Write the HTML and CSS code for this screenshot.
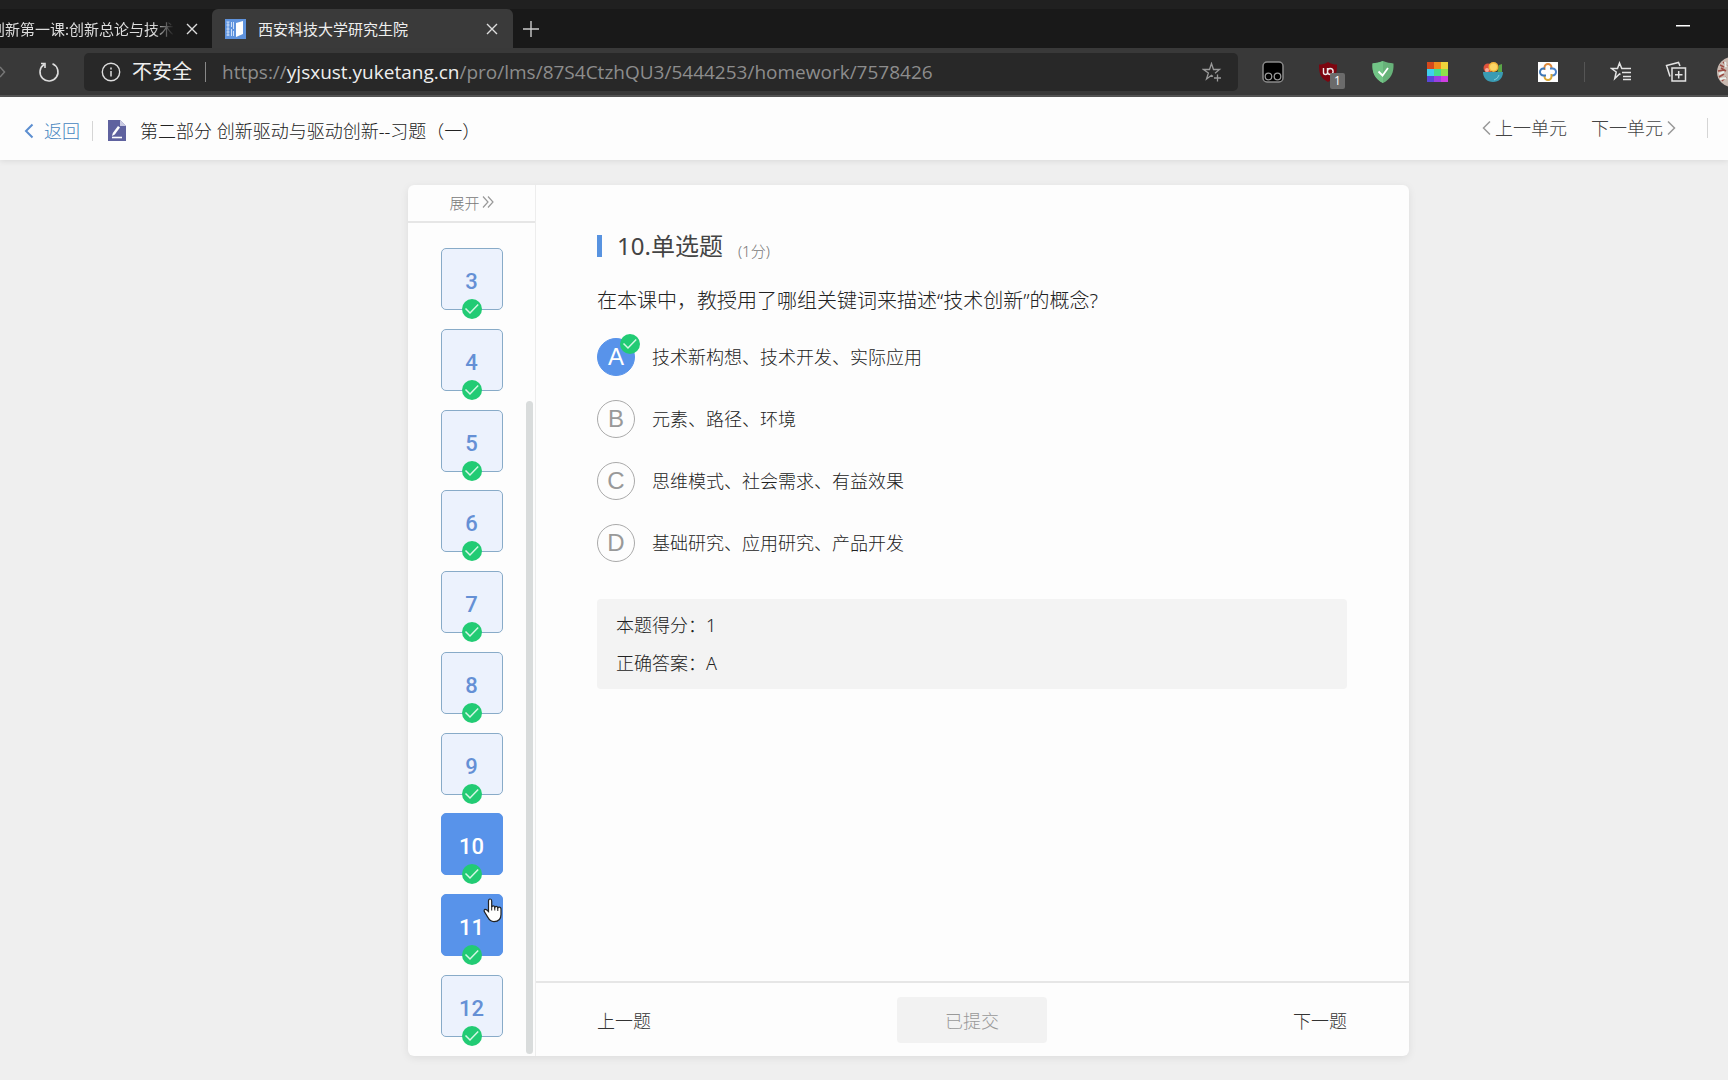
FILE: index.html
```html
<!DOCTYPE html>
<html lang="zh-CN">
<head>
<meta charset="utf-8">
<title>西安科技大学研究生院</title>
<link rel="stylesheet" href="styles.css">
</head>
<body>
<svg width="0" height="0" class="sprite" aria-hidden="true">
  <symbol id="check" viewBox="0 0 20 20"><circle cx="10" cy="10" r="10" fill="#22cb74"/><path d="M3.5 9.5 8 14 16.200 5.500" fill="none" stroke="#d6f7e5" stroke-width="1.500"/></symbol>
  <symbol id="close" viewBox="0 0 12 12"><path d="M1 1l10 10M11 1L1 11" stroke="#ddd" stroke-width="1.400"/></symbol>
</svg>

<div class="tabs">
  <div class="tab tab-first">
    <span class="tab-title faded">创新第一课:创新总论与技术</span>
    <button class="icon-btn" aria-label="关闭"><svg width="12" height="12"><use href="#close"/></svg></button>
  </div>
  <div class="tab tab-active">
    <svg width="21" height="20" viewBox="0 0 21 20"><path fill="#5f93dd" d="M0 0h21v20H0z"/><path fill="#fff" d="M11 4 18 2v13l-7 3z"/><path d="M1.500 3h3M1.500 6h3M1.500 10h3M1.500 13h3M1.500 16h3M6.500 3v5M8.500 3v7M6.500 10v7M8.500 12v5M3 3v14" stroke="#cfe0f8"/></svg>
    <span class="tab-title">西安科技大学研究生院</span>
    <button class="icon-btn" aria-label="关闭"><svg width="12" height="12"><use href="#close"/></svg></button>
  </div>
  <button class="icon-btn new-tab" aria-label="新标签页"><svg width="18" height="18" viewBox="0 0 18 18"><path d="M9 1v16M1 9h16" stroke="#ccc" stroke-width="1.400"/></svg></button>
  <button class="icon-btn minimise" aria-label="最小化"><svg width="14" height="2"><path fill="#fff" d="M0 0h14v1.500H0z"/></svg></button>
</div>

<div class="toolbar">
  <button class="icon-btn forward" aria-label="前进"><svg width="6" height="14" viewBox="0 0 6 14"><path d="M0 2l4.500 5L0 12" fill="none" stroke="#777" stroke-width="1.500"/></svg></button>
  <button class="icon-btn reload" aria-label="刷新"><svg width="22" height="22" viewBox="0 0 22 22"><path d="M14.500 2.700A9 9 0 1 1 6 3.500M3 2.500h4v4.500" fill="none" stroke="#ddd" stroke-width="1.600"/></svg></button>
  <div class="address">
    <svg width="20" height="20" viewBox="0 0 20 20"><circle cx="10" cy="10" r="8.700" fill="none" stroke="#ddd" stroke-width="1.400"/><path d="M10 9v5.500M10 5.500v2" stroke="#ddd" stroke-width="1.500"/></svg>
    <span class="insecure">不安全</span>
    <span class="bar"></span>
    <span class="url">https://<b>yjsxust.yuketang.cn</b>/pro/lms/87S4CtzhQU3/5444253/homework/7578426</span>
    <button class="icon-btn" aria-label="收藏"><svg width="21" height="21" viewBox="0 0 21 21"><path d="M11 14.500l-1.500-1.200-5 3.700 1.900-6L1.500 7.500h6L9.500 1.500l2 6h6l-4.500 3.700M15.500 12.500v7M12 16h7" fill="none" stroke="#999" stroke-width="1.300"/></svg></button>
  </div>
  <div class="extensions">
    <button class="icon-btn" aria-label="Tampermonkey"><svg width="22" height="22" viewBox="0 0 22 22"><rect x="1" y="1" width="20" height="20" rx="4" fill="#000" stroke="#8b8b8b" stroke-width="1.500"/><circle cx="6.500" cy="15.500" r="3.300" fill="none" stroke="#999" stroke-width="1.300"/><circle cx="15.500" cy="15.500" r="3.300" fill="none" stroke="#999" stroke-width="1.300"/></svg></button>
    <button class="icon-btn badged" aria-label="uBlock Origin"><svg width="20" height="20" viewBox="0 0 20 20"><path d="M10 0c3 2 6 2.500 9 2.500 0 9-1 13-9 17.500C2 15.500 1 11.500 1 2.500 4 2.500 7 2 10 0z" fill="#7d0610"/><path d="M5.500 6v4.500q0 2 2 2t2-2V6M9.500 9.500q0-3 2.800-3t2.800 3-2.800 3-2.800-3" fill="none" stroke="#eee" stroke-width="1.400"/></svg><span class="badge">1</span></button>
    <button class="icon-btn" aria-label="AdGuard"><svg width="22" height="22" viewBox="0 0 22 22"><path d="M11 0c4 1.500 7 2 10.500 2.500C22 12 19 18 11 22 3 18 0 12 .500 2.500 4 2 7 1.500 11 0z" fill="#67b279"/><path d="M11 0v22C3 18 0 12 .500 2.500 4 2 7 1.500 11 0z" fill="#72c486"/><path d="M6.500 10.500l4 4 5.500-7.500" fill="none" stroke="#fff" stroke-width="1.800"/></svg></button>
    <button class="icon-btn" aria-label="调色板"><svg width="22" height="22" viewBox="0 0 22 22"><path fill="#d6491c" d="M0 1h7v7H0z"/><path fill="#f08a1d" d="M7 1h7v7H7z"/><path fill="#eed43b" d="M14 1h7v7h-7z"/><path fill="#3fd0ee" d="M0 8h7v7H0z"/><path fill="#44dd8c" d="M7 8h7v7H7z"/><path fill="#8fe04a" d="M14 8h7v7h-7z"/><path fill="#5a46d8" d="M0 15h7v6H0z"/><path fill="#9a3fe0" d="M7 15h7v6H7z"/><path fill="#cf3fe0" d="M14 15h7v6h-7z"/></svg></button>
    <button class="icon-btn" aria-label="沙拉查词"><svg width="22" height="22" viewBox="0 0 22 22"><circle cx="6" cy="7" r="4.500" fill="#e0523c"/><path d="M17 4l3-1v10h-5z" fill="#5aa647"/><circle cx="11.500" cy="6" r="5" fill="#f4b63c"/><circle cx="11.500" cy="6" r="3.500" fill="#fbd565"/><circle cx="5" cy="9" r="2" fill="#f6ab9b"/><path d="M1 11h20c0 6-4 10-10 10S1 17 1 11z" fill="#3a9bb3"/><path d="M17 14q-1 4-5 5" stroke="#82cfdc" fill="none"/></svg></button>
    <button class="icon-btn" aria-label="扩展"><svg width="22" height="22" viewBox="0 0 22 22"><path fill="#fff" d="M1 1h20v20H1z"/><g fill="none" stroke-width="2"><path d="M7.500 9V6.500a3.500 3.500 0 0 1 7 0V8" stroke="#e08a3c"/><path d="M13 7.500h2.500a3.500 3.500 0 0 1 0 7H14" stroke="#4b83c9"/><path d="M14.500 13v2.500a3.500 3.500 0 0 1-7 0V14" stroke="#d9a735"/><path d="M9 14.500H6.500a3.500 3.500 0 0 1 0-7H8" stroke="#3f78b8"/></g></svg></button>
    <span class="bar"></span>
    <button class="icon-btn" aria-label="收藏夹"><svg width="22" height="22" viewBox="0 0 22 22"><path d="M10.500 13.500 9.500 13 4.800 17.500l1.400-6.500L1.500 7.500h6L9.500 2l2.300 5.500H21M12 11.500h9M13 15.500h8M13 18.500h8" fill="none" stroke="#e3e3e3" stroke-width="1.500"/></svg></button>
    <button class="icon-btn" aria-label="集锦"><svg width="22" height="22" viewBox="0 0 22 22"><path d="M7 7h13.500v13H7zM13.700 10v7.500M10 13.700h7.500M5 15.500 1.500 4.500l12-3L15 5" fill="none" stroke="#e3e3e3" stroke-width="1.500"/></svg></button>
    <button class="icon-btn avatar" aria-label="个人资料"><svg width="30" height="30" viewBox="0 0 30 30"><circle cx="15" cy="15" r="15" fill="#c9b9b0"/><path d="M3 8l4 2M1 14l6-1M2 20l5-3M5 24l4-4M6 5l4 4M4 11l5 3" stroke="#9c4d45" stroke-width="1.500"/><path d="M2 17l5-2M8 5l1 5M3 22l6-1" stroke="#e8f0ec" stroke-width="2"/></svg></button>
  </div>
</div>

<header class="page-header">
  <a class="back" href="#"><svg width="10" height="16" viewBox="0 0 10 16"><path d="M8.500 1.500 2 8l6.500 6.500" fill="none" stroke="#5c8ed0" stroke-width="2"/></svg>返回</a>
  <span class="bar"></span>
  <svg class="doc" width="18" height="21" viewBox="0 0 18 21"><path d="M0 0h12l6 6v15H0z" fill="#5f629f"/><path d="M12 0v6h6z" fill="#c9cae2"/><path d="M4 17.500h10" stroke="#fff" stroke-width="1.600"/><path d="M4 16l.8-3L10 6l2 1.500-5.200 7z" fill="#fff"/></svg>
  <h1>第二部分 创新驱动与驱动创新--习题（一）</h1>
  <nav class="units">
    <a href="#"><svg width="9" height="16" viewBox="0 0 9 16"><path d="M8 1.500 1.500 8 8 14.500" fill="none" stroke="#999" stroke-width="1.500"/></svg>上一单元</a>
    <a href="#">下一单元<svg width="9" height="16" viewBox="0 0 9 16"><path d="M1 1.500 7.500 8 1 14.500" fill="none" stroke="#999" stroke-width="1.500"/></svg></a>
    <span class="bar"></span>
  </nav>
</header>

<main>
  <div class="card">
    <aside>
      <button class="expand">展开<svg width="12" height="14" viewBox="0 0 12 14"><path d="M1 1.500 6 7l-5 5.500M6 1.500 11 7l-5 5.500" fill="none" stroke="#999" stroke-width="1.200"/></svg></button>
      <div class="questions">
        <button class="number">3<svg class="tick"><use href="#check"/></svg></button>
        <button class="number">4<svg class="tick"><use href="#check"/></svg></button>
        <button class="number">5<svg class="tick"><use href="#check"/></svg></button>
        <button class="number">6<svg class="tick"><use href="#check"/></svg></button>
        <button class="number">7<svg class="tick"><use href="#check"/></svg></button>
        <button class="number">8<svg class="tick"><use href="#check"/></svg></button>
        <button class="number">9<svg class="tick"><use href="#check"/></svg></button>
        <button class="number active">10<svg class="tick"><use href="#check"/></svg></button>
        <button class="number active">11<svg class="tick"><use href="#check"/></svg>
          <svg class="pointer" width="19" height="25" viewBox="0 0 19 25"><path d="M5.500 13.500V3q0-2 1.600-2t1.600 2v6q.4-1.200 1.600-1.200t1.500 1.500q.4-1 1.500-1t1.500 1.600q.3-.8 1.500-.8 1.700 0 1.700 2v5.500q0 7-7 7-4 0-6-4l-3.700-6q-.6-1.800.7-2.200 1.500-.2 3.500 2.100z" fill="#fff" stroke="#222" stroke-width="1.200"/><path d="M8.700 8.500v4M11.800 9v3.500M14.800 10v3" stroke="#222"/></svg></button>
        <button class="number">12<svg class="tick"><use href="#check"/></svg></button>
        <span class="thumb"></span>
      </div>
    </aside>
    <section class="content">
      <form class="question">
        <h2><span>10.单选题</span><small>(1分)</small></h2>
        <p class="prompt">在本课中，教授用了哪组关键词来描述“技术创新”的概念?</p>
        <div class="options">
          <label class="option"><span class="mark"><input type="radio" name="answer" checked><span class="letter">A</span><svg class="tick"><use href="#check"/></svg></span>技术新构想、技术开发、实际应用</label>
          <label class="option"><span class="mark"><input type="radio" name="answer"><span class="letter">B</span></span>元素、路径、环境</label>
          <label class="option"><span class="mark"><input type="radio" name="answer"><span class="letter">C</span></span>思维模式、社会需求、有益效果</label>
          <label class="option"><span class="mark"><input type="radio" name="answer"><span class="letter">D</span></span>基础研究、应用研究、产品开发</label>
        </div>
        <div class="result">
          <p>本题得分：1</p>
          <p>正确答案：A</p>
        </div>
      </form>
      <footer>
        <button class="step">上一题</button>
        <button class="submitted" disabled>已提交</button>
        <button class="step">下一题</button>
      </footer>
    </section>
  </div>
</main>
</body>
</html>
```
FILE: styles.css
```css
* { box-sizing: border-box; }

body {
  margin: 0;
  min-height: 100vh;
  display: flex;
  flex-direction: column;
  overflow-x: hidden;
  background: #efefef;
  color: #222;
  font-family: "Noto Sans", "Noto Sans CJK SC", sans-serif;
  font-size: 18px;
  font-weight: 300;
}

h1, h2, p { margin: 0; font-weight: inherit; }
svg { display: block; flex: none; }
a { color: inherit; text-decoration: none; }
button { padding: 0; border: 0; background: none; color: inherit; font: inherit; }
.sprite { position: absolute; }

.icon-btn { display: flex; flex: none; align-items: center; justify-content: center; }
.bar { flex: none; width: 1px; height: 20px; background: #d5d5d5; }

/* Browser tabs */
.tabs {
  display: flex;
  height: 48px;
  border-top: 9px solid #202020;
  background: #191919;
  color: #eee;
  font-size: 15px;
  font-weight: 400;
}
.tab { display: flex; align-items: center; justify-content: space-between; line-height: 20px; }
.tab-title { white-space: nowrap; }
.tab-first { width: 212px; padding-right: 14px; }
.faded {
  display: flex;
  justify-content: flex-end;
  width: 174px;
  overflow: hidden;
  color: #ddd;
  mask-image: linear-gradient(90deg, #000 88%, transparent);
}
.tab-active {
  width: 301px;
  gap: 12px;
  padding: 0 15px 0 13px;
  border-radius: 6px 6px 0 0;
  background: #3a3a3a;
}
.tab-active .tab-title { flex: 1; }
.new-tab { margin-left: 9px; }
.minimise { margin: 16px 38px auto auto; }

/* Address row */
.toolbar {
  display: flex;
  align-items: center;
  height: 49px;
  padding-top: 1px;
  border-bottom: 2px solid #555;
  background: #393939;
}
.forward { width: 6px; }
.reload { margin: 0 24px 0 32px; }
.address {
  display: flex;
  flex: 1;
  align-items: center;
  height: 38px;
  padding: 0 15px 0 17px;
  border-radius: 5px;
  background: #282828;
  color: #eee;
  font-size: 20px;
  line-height: 28px;
}
.insecure { margin: 0 13px 0 11px; font-weight: 400; }
.address .bar { background: #888; }
.url {
  flex: 1;
  margin-left: 16px;
  color: #8d8d8d;
  font-family: "Open Sans", sans-serif;
  font-size: 19px;
  font-weight: 400;
}
.url b { color: #eee; font-weight: 400; }
.extensions { display: flex; align-items: center; gap: 33px; padding-left: 24px; margin-right: -19px; }
.extensions .bar { margin: 0 -8px; background: #555; }
.badged { position: relative; width: 22px; }
.badge {
  position: absolute;
  left: 13px;
  top: 11px;
  width: 15px;
  height: 16px;
  border-radius: 2px;
  background: #6b6b6b;
  color: #fff;
  font: 400 12px/16px "Open Sans", sans-serif;
}
.avatar { margin-left: -3px; }

/* Page header */
.page-header {
  display: flex;
  align-items: center;
  height: 63px;
  padding: 4px 20px 0 24px;
  background: #fdfdfd;
  box-shadow: 0 1px 6px #00000018;
  line-height: 26px;
}
.back { display: flex; align-items: center; gap: 10px; margin-right: 12px; color: #4585c0; }
.doc { margin: 0 14px 0 15px; }
.page-header h1 { flex: 1; font-size: 18px; }
.units { display: flex; align-items: center; gap: 24px; padding-bottom: 5px; color: #444; }
.units a { display: flex; align-items: center; gap: 4px; }
.units .bar { margin-left: 7px; }

/* Exercise card */
main { display: flex; flex: 1; padding: 25px 319px 24px 408px; }
.card {
  display: flex;
  flex: 1;
  border-radius: 6px;
  background: #fdfdfd;
  box-shadow: 0 2px 8px #00000014;
}
aside {
  display: flex;
  flex: none;
  flex-direction: column;
  width: 128px;
  border-right: 1px solid #ededed;
}
.expand {
  display: flex;
  align-items: center;
  justify-content: center;
  gap: 2px;
  height: 38px;
  padding-bottom: 2px;
  border-bottom: 2px solid #e6e6e6;
  color: #777;
  font-size: 15px;
}
.questions {
  position: relative;
  display: flex;
  flex: 1;
  flex-direction: column;
  align-items: center;
  justify-content: space-between;
  padding: 25px 0 19px;
}
.number {
  position: relative;
  width: 62px;
  height: 62px;
  padding-top: 6px;
  border: 1px solid #88abc8;
  border-radius: 5px;
  background: #ecf2fd;
  color: #6590d5;
  font: 500 22px/30px Roboto, sans-serif;
}
.number.active { border-color: #5893e8; background: #5893ea; color: #fff; }
.tick { position: absolute; width: 20px; height: 20px; }
.number .tick { left: 20px; bottom: -10px; }
.pointer { position: absolute; left: 41px; top: 3px; }
.thumb {
  position: absolute;
  right: 2px;
  top: 178px;
  bottom: 2px;
  width: 7px;
  border-radius: 4px;
  background: #d9dcdc;
}

.content { display: flex; flex: 1; flex-direction: column; }
.question { flex: 1; padding: 44px 62px 0 61px; }
h2 { display: flex; align-items: baseline; gap: 15px; font-size: 24px; line-height: 34px; }
h2 span { display: flex; align-items: center; font-weight: 400; color: #444; }
h2 span::before { content: ""; width: 5px; height: 22px; margin-right: 15px; background: #5893e0; }
h2 small { color: #777; font-size: 15px; }
.prompt { margin-top: 18px; font-size: 20px; line-height: 30px; }
.options { display: flex; flex-direction: column; gap: 24px; margin-top: 22px; }
.option { display: flex; align-items: center; gap: 17px; line-height: 26px; }
.mark { position: relative; display: grid; width: 38px; height: 38px; place-items: center; }
.mark > input, .mark > .letter { grid-area: 1 / 1; }
.mark input {
  width: 38px;
  height: 38px;
  margin: 0;
  border: 1px solid #aaa;
  border-radius: 50%;
  appearance: none;
}
.mark input:checked { border-color: #5893ea; background: #5893ea; }
.letter { color: #999; font: 400 24px/30px "Liberation Sans", sans-serif; }
.mark input:checked + .letter { color: #fff; }
.mark .tick { top: -4px; right: -5px; }
.result {
  margin-top: 37px;
  padding: 7px 19px;
  border-radius: 4px;
  background: #f3f3f3;
  line-height: 38px;
}

footer {
  display: flex;
  align-items: center;
  justify-content: space-between;
  height: 75px;
  padding: 0 62px 0 61px;
  border-top: 2px solid #e6e6e6;
  color: #333;
}
.submitted { width: 150px; height: 46px; border-radius: 4px; background: #f2f2f2; color: #999; }
```
